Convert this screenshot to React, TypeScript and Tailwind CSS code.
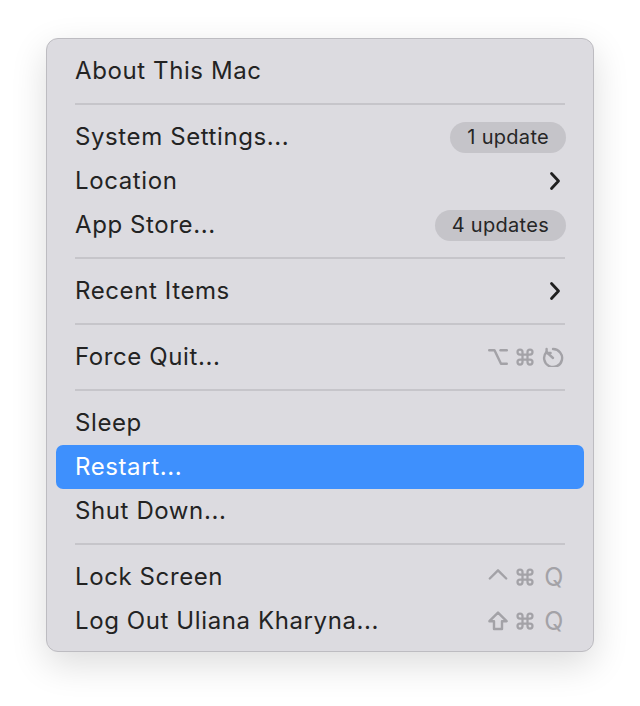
import { ReactNode } from "react";

type Item =
  | { kind: "sep" }
  | {
      kind: "item";
      label: string;
      badge?: string;
      submenu?: boolean;
      keys?: ReactNode;
      active?: boolean;
    };

const gray = "#a3a2a7";

const Glyph = ({ children, w = 20 }: { children: ReactNode; w?: number }) => (
  <svg
    width={w}
    height="20"
    viewBox={`0 0 ${w} 20`}
    fill="none"
    stroke={gray}
    strokeWidth="2.4"
    strokeLinecap="round"
    strokeLinejoin="round"
  >
    {children}
  </svg>
);

const Cmd = () => (
  <svg width="20" height="20" viewBox="0 0 24 24" fill="none" stroke={gray} strokeWidth="2.7" strokeLinecap="round" strokeLinejoin="round">
    <path d="M15 6v12a3 3 0 1 0 3-3H6a3 3 0 1 0 3 3V6a3 3 0 1 0-3 3h12a3 3 0 1 0-3-3" />
  </svg>
);

const Opt = () => (
  <Glyph>
    <path d="M1.2 3.2 H6.5 L13 16.8 H18.8" />
    <path d="M12.5 3.2 H18.8" />
  </Glyph>
);

const Ctrl = () => (
  <Glyph>
    <path d="M1.8 11.5 L10 3.3 L18.2 11.5" />
  </Glyph>
);

const Shift = () => (
  <Glyph>
    <path d="M10 1.6 L18.6 10.2 H14 V18 H6 V10.2 H1.4 Z" />
  </Glyph>
);

const Restart = () => (
  <Glyph w={22}>
    <path d="M11 2 A9 9 0 1 1 4.4 5" />
    <path d="M4.6 2 L4.6 6 L8.6 6" />
    <path d="M5 5.6 L11 11" />
  </Glyph>
);

const Chevron = () => (
  <svg width="12" height="20" viewBox="0 0 12 20" className="mr-[3px]">
    <path
      d="M2.5 2.5 L9.5 10 L2.5 17.5"
      fill="none"
      stroke="#1f1f1f"
      strokeWidth="2.8"
      strokeLinecap="round"
      strokeLinejoin="round"
    />
  </svg>
);

const Keys = ({ children }: { children: ReactNode }) => (
  <span className="flex items-center gap-[7px] text-[25px] leading-none text-[#a3a2a7]">{children}</span>
);

const items: Item[] = [
  { kind: "item", label: "About This Mac" },
  { kind: "sep" },
  { kind: "item", label: "System Settings...", badge: "1 update" },
  { kind: "item", label: "Location", submenu: true },
  { kind: "item", label: "App Store...", badge: "4 updates" },
  { kind: "sep" },
  { kind: "item", label: "Recent Items", submenu: true },
  { kind: "sep" },
  {
    kind: "item",
    label: "Force Quit...",
    keys: (
      <Keys>
        <Opt />
        <Cmd />
        <Restart />
      </Keys>
    ),
  },
  { kind: "sep" },
  { kind: "item", label: "Sleep" },
  { kind: "item", label: "Restart...", active: true },
  { kind: "item", label: "Shut Down..." },
  { kind: "sep" },
  {
    kind: "item",
    label: "Lock Screen",
    keys: (
      <Keys>
        <Ctrl />
        <Cmd />
        <span className="ml-[2px]">Q</span>
      </Keys>
    ),
  },
  {
    kind: "item",
    label: "Log Out Uliana Kharyna...",
    keys: (
      <Keys>
        <Shift />
        <Cmd />
        <span className="ml-[2px]">Q</span>
      </Keys>
    ),
  },
];

export default function App() {
  return (
    <div className="min-h-[706px] w-[640px] bg-white pl-[46px] pt-[38px] font-['Inter',sans-serif]">
      <div className="w-[548px] rounded-[12px] border border-[#bdbcc1] bg-[#dcdbe0] pt-[10px] pb-[8px] shadow-[0_12px_36px_rgba(0,0,0,0.14)]">
        {items.map((it, i) =>
          it.kind === "sep" ? (
            <div key={i} className="flex h-[22px] items-center px-[28px]">
              <div className="h-[2px] w-full bg-[#c6c5ca]" />
            </div>
          ) : (
            <div
              key={i}
              className={`mx-[9px] flex h-[44px] items-center justify-between rounded-[7px] pl-[19px] pr-[20px] text-[24px] tracking-[0.6px] ${
                it.active ? "bg-[#3e90fd] text-white" : "text-[#232323]"
              }`}
            >
              <span>{it.label}</span>
              {it.badge && (
                <span className="-mr-[2px] flex h-[31px] items-center rounded-full bg-[#c5c4c9] px-[17px] text-[20px] tracking-[0.3px] text-[#262626]">
                  {it.badge}
                </span>
              )}
              {it.submenu && <Chevron />}
              {it.keys}
            </div>
          )
        )}
      </div>
    </div>
  );
}
